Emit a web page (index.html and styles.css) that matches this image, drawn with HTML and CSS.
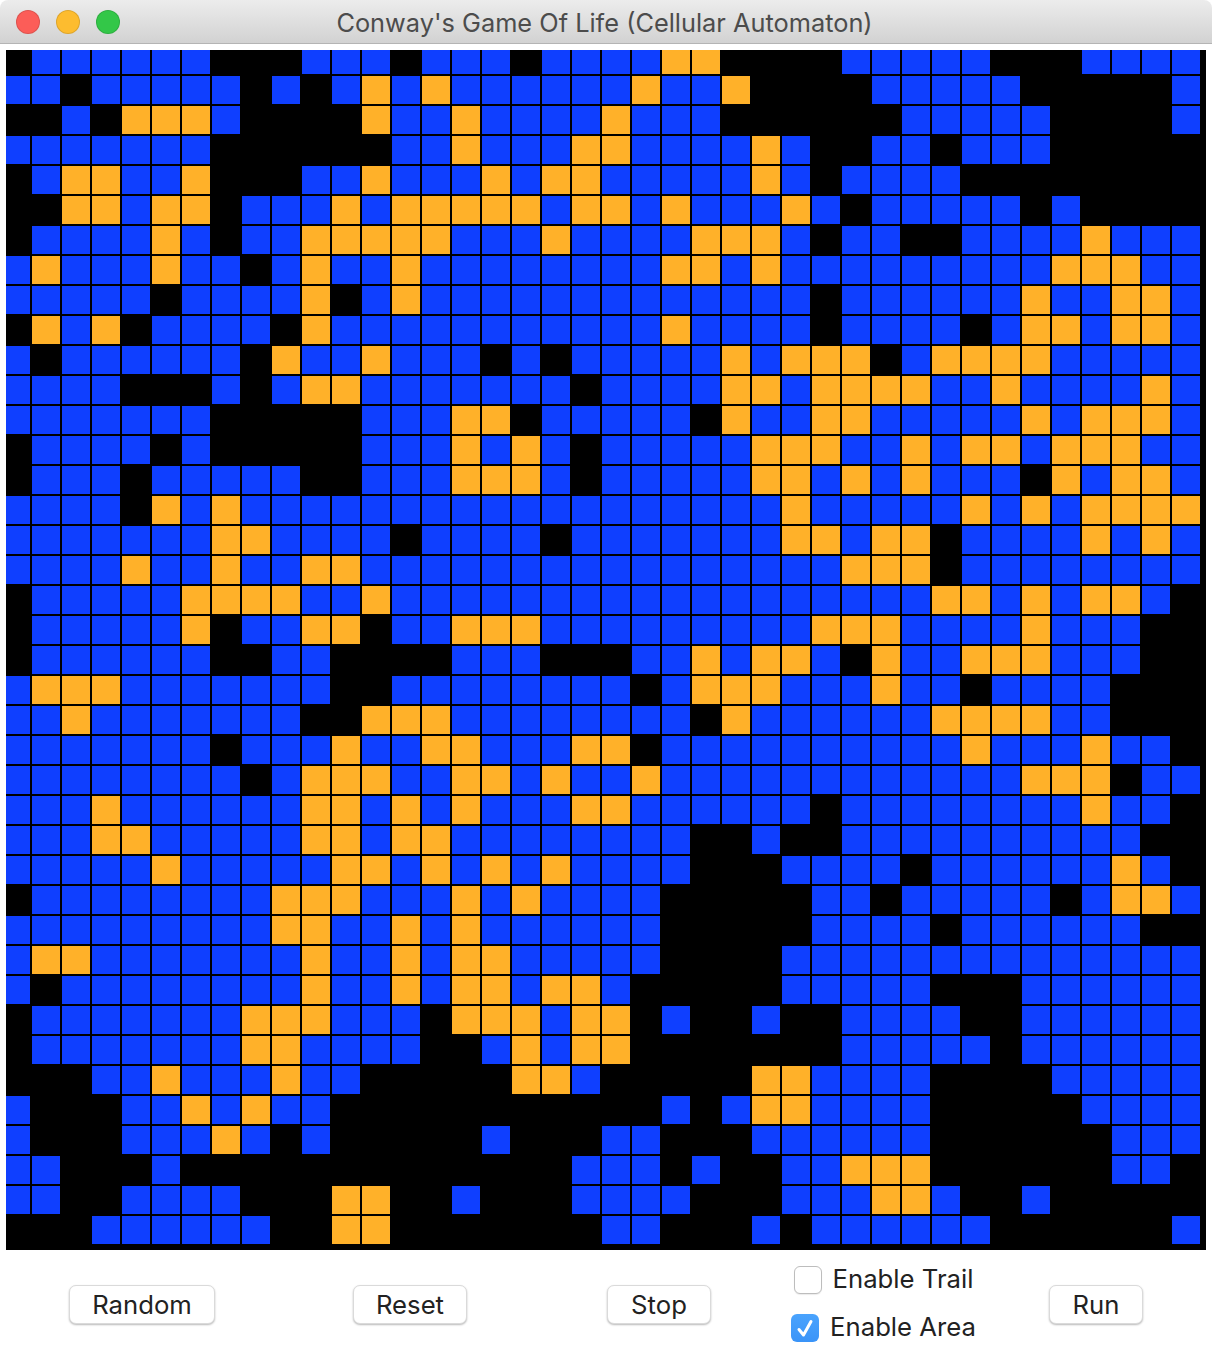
FILE: index.html
```html
<!DOCTYPE html>
<html lang="en">
<head>
    <meta charset="UTF-8">
    <meta name="viewport" content="width=device-width, initial-scale=1.0">
    <title>Conway's Game Of Life (Cellular Automaton)</title>
    <link rel="stylesheet" href="styles.css">
</head>
<body>

<div class="titlebar">
    <div class="lights">
        <span class="light red"></span>
        <span class="light yellow"></span>
        <span class="light green"></span>
    </div>
    <div class="title">Conway's Game Of Life (Cellular Automaton)</div>
</div>

<div class="board">
    <div class="cells" id="cells"></div>
</div>

<div class="controls">
    <button type="button" class="btn btn-random">Random</button>
    <button type="button" class="btn btn-reset">Reset</button>
    <button type="button" class="btn btn-stop">Stop</button>
    <div class="options">
        <label class="option option-trail">
            <span class="box"></span>
            <span class="option-text">Enable Trail</span>
        </label>
        <label class="option option-area">
            <span class="box box-checked">
                <svg viewBox="0 0 28 28" width="28" height="28"><path d="M8 15.5 L12.5 21 L20 7.5" fill="none" stroke="#ffffff" stroke-width="3" stroke-linecap="round" stroke-linejoin="round"/></svg>
            </span>
            <span class="option-text">Enable Area</span>
        </label>
    </div>
    <button type="button" class="btn btn-run">Run</button>
</div>

<script src="script.js"></script>
</body>
</html>
```

FILE: styles.css
```css
* {
    box-sizing: border-box;
}

html, body {
    height: 1346px;
    overflow: hidden;
}

body {
    margin: 0;
    background-color: #ffffff;
    font-family: Inter, Roboto, "Liberation Sans", sans-serif;
    color: #222222;
}

.titlebar {
    position: relative;
    display: flex;
    align-items: center;
    justify-content: center;
    height: 44px;
    background: linear-gradient(#ececec, #d2d2d2);
    border-bottom: 1px solid #b4b4b4;
    border-radius: 8px 8px 0 0;
    padding: 1px 3px 0 0;
}

.lights {
    position: absolute;
    left: 16px;
    top: 10px;
    display: flex;
    gap: 16px;
}

.light {
    width: 24px;
    height: 24px;
    border-radius: 50%;
    border: 1px solid rgba(0, 0, 0, 0.12);
}

.red {
    background-color: #fc5d58;
}

.yellow {
    background-color: #fdbc2f;
}

.green {
    background-color: #33c748;
}

.title {
    font-size: 25.35px;
    color: #4c4c4c;
}

.board {
    width: 1200px;
    height: 1200px;
    margin: 6px 6px 0;
    background-color: #000000;
    overflow: hidden;
}

.cells {
    display: grid;
    grid-template-columns: repeat(40, 28px);
    grid-auto-rows: 28px;
    gap: 2px;
    margin: -4px 0 0 -4px;
}

.alive {
    background-color: #0f3fff;
}

.born {
    background-color: #ffb129;
}

.controls {
    display: flex;
    align-items: center;
    padding: 16px 0 4px 69px;
}

.btn {
    height: 39px;
    padding: 1px 0 0;
    font-family: inherit;
    font-size: 25.7px;
    color: #222222;
    background-color: #ffffff;
    border: 1px solid #dadada;
    border-radius: 7px;
    box-shadow: 0 1px 2px rgba(0, 0, 0, 0.28);
}

.btn-random {
    width: 146px;
}

.btn-reset {
    width: 114px;
    margin-left: 138px;
}

.btn-stop {
    width: 104px;
    margin-left: 140px;
}

.btn-run {
    width: 94px;
    margin-left: 74px;
}

.options {
    display: flex;
    flex-direction: column;
    align-items: center;
    gap: 20px;
    width: 183px;
    margin-left: 81px;
}

.option {
    display: flex;
    align-items: center;
    gap: 11px;
    height: 28px;
    font-size: 25.7px;
    white-space: nowrap;
}

.option-text {
    margin-top: -4px;
}

.box {
    flex: none;
    width: 28px;
    height: 28px;
    background-color: #ffffff;
    border: 1px solid #bdbdbd;
    border-radius: 6px;
    box-shadow: 0 1px 1px rgba(0, 0, 0, 0.08);
}

.box-checked {
    background: linear-gradient(#4aa3fd, #3a94f8);
    border: none;
    box-shadow: none;
}

.box-checked svg {
    display: block;
}
```

FILE: script.js
```js
// B = alive, Y = just born, . = dead
var rows = [
    ".BBBBBB...BBB.BBB.BBBBYY....BBBBB...BBBB",
    "BB.BBBBB.B.BYBYBBBBBBYBBY....BBBBB.....B",
    "..B.YYYB....YBBYBBBBYBBB......BBBBB....B",
    "BBBBBBB......BBYBBBYYBBBBYB..BB.BBB.....",
    ".BYYBBY...BBYBBBYBYYBBBBBYB.BBBB........",
    "..YYBYY.BBBYBYYYYYBYYBYBBBYB.BBBBB.B....",
    ".BBBBYB.BBYYYYYBBBYBBBBYYYB.BB..BBBBYBBB",
    "BYBBBYBB.BYBBYBBBBBBBBYYBYBBBBBBBBBYYYBB",
    "BBBBB.BBBBY.BYBBBBBBBBBBBBB.BBBBBBYBBYYB",
    ".YBY.BBBB.YBBBBBBBBBBBYBBBB.BBBB.BYYBYYB",
    "B.BBBBBB.YBBYBBB.B.BBBBBYBYYY.BYYYYBBBBB",
    "BBBB...B.BYYBBBBBBB.BBBBYYBYYYYBBYBBBBYB",
    "BBBBBBB.....BBBYY.BBBBB.YBBYYBBBBBYBYYYB",
    ".BBBB.B.....BBBYBYB.BBBBBYYYBBYBYYBYYYBB",
    ".BBB.BBBBB..BBBYYYB.BBBBBYYBYBYBBB.YBYYB",
    "BBBB.YBYBBBBBBBBBBBBBBBBBBYBBBBBYBYBYYYY",
    "BBBBBBBYYBBBB.BBBB.BBBBBBBYYBYY.BBBBYBYB",
    "BBBBYBBYBBYYBBBBBBBBBBBBBBBBYYY.BBBBBBBB",
    ".BBBBBYYYYBBYBBBBBBBBBBBBBBBBBBYYBYBYYB.",
    ".BBBBBY.BBYY.BBYYYBBBBBBBBBYYYBBBBYBBB..",
    ".BBBBBB..BB....BBB...BBYBYYB.YBBYYYBBB..",
    "BYYYBBBBBBB..BBBBBBBB.BYYYBBBYBB.BBBB...",
    "BBYBBBBBBB..YYYBBBBBBBB.YBBBBBBYYYYBB...",
    "BBBBBBB.BBBYBBYYBBBYY.BBBBBBBBBBYBBBYBB.",
    "BBBBBBBB.BYYYBBYYBYBBYBBBBBBBBBBBBYYY.BB",
    "BBBYBBBBBBYYBYBYBBBYYBBBBBB.BBBBBBBBYBB.",
    "BBBYYBBBBBYYBYYBBBBBBBB..B..BBBBBBBBBB..",
    "BBBBBYBBBBBYYBYBYBYBBBB...BBBB.BBBBBBYB.",
    ".BBBBBBBBYYYBBBYBYBBBB.....BB.BBBBB.BYYB",
    "BBBBBBBBBYYBBYBYBBBBBB.....BBBB.BBBBBB..",
    "BYYBBBBBBBYBBYBYYBBBBB....BBBBBBBBBBBBBB",
    "B.BBBBBBBBYBBYBYYBYYB.....BBBBB...BBBBBB",
    ".BBBBBBBYYYBBB.YYYBYY.B..B..BBBB..BBBBBB",
    ".BBBBBBBYYBBBB..BYBYY.......BBBBB.BBBBBB",
    "...BBYBBBYBB.....YYB.....YYBBBB....BBBBB",
    "B...BBYBYBB...........B.BYYBBBB.....BBBB",
    "B...BBBYB.B.....B...BB...BBBBBB......BBB",
    "BB...B.............BBB.B..BBYYY......BB.",
    "BB..BBBB...YY..B...BBBB...BBBYYB..B.....",
    "...BBBBBB..YY.......BB...B.BBBBBB......B"
];

var cells = document.getElementById("cells");

rows.forEach(function (row) {
    for (var i = 0; i < row.length; i++) {
        var cell = document.createElement("div");
        if (row[i] === "B") {
            cell.className = "alive";
        } else if (row[i] === "Y") {
            cell.className = "born";
        }
        cells.appendChild(cell);
    }
});
```
